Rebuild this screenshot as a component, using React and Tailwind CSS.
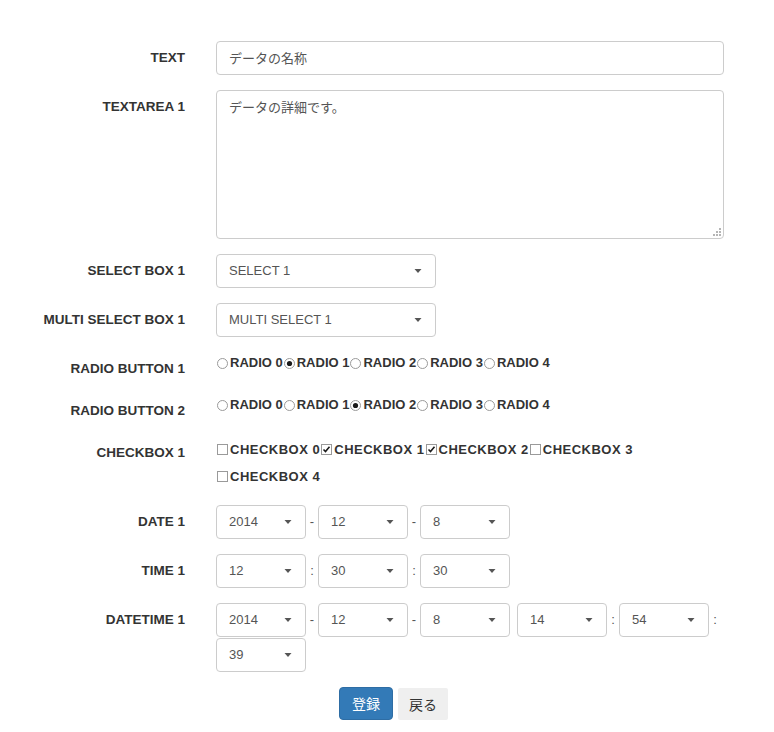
import React from 'react';

const Label = ({ children }) => (
  <div className="w-[185px] shrink-0 text-right pt-[7px] text-[13.5px] leading-[20px] font-bold text-[#333]">
    {children}
  </div>
);

const Caret = () => (
  <svg width="8" height="4" viewBox="0 0 8 4" className="shrink-0">
    <path d="M0.5 0 L7.5 0 L4 4 Z" fill="#555" />
  </svg>
);

const SelectBox = ({ value, width = 'w-[90px]' }) => (
  <div className={`${width} h-[34px] shrink-0 flex items-center justify-between pl-[12px] pr-[13px] border border-[#ccc] rounded-[4px] bg-white text-[13px] text-[#555]`}>
    <span>{value}</span>
    <Caret />
  </div>
);

const Sep = ({ ch }) => (
  <div className="w-[12px] h-[34px] shrink-0 flex items-center justify-center text-[13px] text-[#555]">{ch}</div>
);

const Radio = ({ checked }) => (
  <svg width="13" height="13" viewBox="0 0 13 13" className="shrink-0 mr-[1px]">
    <circle cx="6.5" cy="6.5" r="5" fill="white" stroke="#9a9a9a" strokeWidth="1" />
    {checked && <circle cx="6.5" cy="6.5" r="2.6" fill="#1a1a1a" />}
  </svg>
);

const Check = ({ checked }) => (
  <svg width="13" height="13" viewBox="0 0 13 13" className="shrink-0 mr-[1px]">
    <rect x="1.5" y="1.5" width="10" height="10" fill="white" stroke="#9a9a9a" strokeWidth="1" />
    {checked && <path d="M3.5 6.5 L5.5 8.5 L9.5 3.8" fill="none" stroke="#1a1a1a" strokeWidth="1.6" />}
  </svg>
);

const RadioGroup = ({ selected }) => (
  <div className="flex flex-wrap leading-[22px] text-[13px] font-bold text-[#333]">
    {[0, 1, 2, 3, 4].map(i => (
      <span key={i} className="inline-flex items-center">
        <Radio checked={i === selected} />
        RADIO {i}
      </span>
    ))}
  </div>
);

const App = () => {
  const checked = [false, true, true, false, false];

  return (
    <div className="w-[774px] min-h-[732px] bg-white pt-[41px] font-['Liberation_Sans','Noto_Sans_CJK_JP',Arial,sans-serif]">
      <div className="flex mb-[15px]">
        <Label>TEXT</Label>
        <div className="ml-[31px] w-[508px]">
          <div className="h-[34px] flex items-center px-[12px] border border-[#ccc] rounded-[4px] text-[13px] text-[#555] font-['Noto_Sans_CJK_JP',sans-serif]">
            データの名称
          </div>
        </div>
      </div>

      <div className="flex mb-[15px]">
        <Label>TEXTAREA 1</Label>
        <div className="ml-[31px] w-[508px]">
          <div className="relative h-[149px] px-[12px] py-[6px] border border-[#ccc] rounded-[4px] text-[13px] leading-[20px] text-[#555] font-['Noto_Sans_CJK_JP',sans-serif]">
            データの詳細です。
            <svg width="10" height="10" viewBox="0 0 10 10" className="absolute right-[1px] bottom-[1px]">
              <g fill="#b5b5b5">
                <rect x="7" y="1" width="2" height="2" />
                <rect x="4" y="4" width="2" height="2" />
                <rect x="7" y="4" width="2" height="2" />
                <rect x="1" y="7" width="2" height="2" />
                <rect x="4" y="7" width="2" height="2" />
                <rect x="7" y="7" width="2" height="2" />
              </g>
            </svg>
          </div>
        </div>
      </div>

      <div className="flex mb-[15px]">
        <Label>SELECT BOX 1</Label>
        <div className="ml-[31px] w-[508px]">
          <SelectBox value="SELECT 1" width="w-[220px]" />
        </div>
      </div>

      <div className="flex mb-[15px]">
        <Label>MULTI SELECT BOX 1</Label>
        <div className="ml-[31px] w-[508px]">
          <SelectBox value="MULTI SELECT 1" width="w-[220px]" />
        </div>
      </div>

      <div className="flex mb-[15px]">
        <Label>RADIO BUTTON 1</Label>
        <div className="ml-[31px] w-[508px]">
          <RadioGroup selected={1} />
        </div>
      </div>

      <div className="flex mb-[15px]">
        <Label>RADIO BUTTON 2</Label>
        <div className="ml-[31px] w-[508px]">
          <RadioGroup selected={2} />
        </div>
      </div>

      <div className="flex mb-[15px]">
        <Label>CHECKBOX 1</Label>
        <div className="ml-[31px] w-[508px]">
          <div className="flex flex-wrap leading-[27px] text-[13px] font-bold text-[#333] tracking-[0.5px]">
            {checked.map((c, i) => (
              <span key={i} className="inline-flex items-center">
                <Check checked={c} />
                CHECKBOX {i}
              </span>
            ))}
          </div>
        </div>
      </div>

      <div className="flex mb-[15px]">
        <Label>DATE 1</Label>
        <div className="ml-[31px] w-[508px] flex">
          <SelectBox value="2014" />
          <Sep ch="-" />
          <SelectBox value="12" />
          <Sep ch="-" />
          <SelectBox value="8" />
        </div>
      </div>

      <div className="flex mb-[15px]">
        <Label>TIME 1</Label>
        <div className="ml-[31px] w-[508px] flex">
          <SelectBox value="12" />
          <Sep ch=":" />
          <SelectBox value="30" />
          <Sep ch=":" />
          <SelectBox value="30" />
        </div>
      </div>

      <div className="flex mb-[15px]">
        <Label>DATETIME 1</Label>
        <div className="ml-[31px] w-[508px] flex flex-wrap gap-y-[1px]">
          <SelectBox value="2014" />
          <Sep ch="-" />
          <SelectBox value="12" />
          <Sep ch="-" />
          <SelectBox value="8" />
          <div className="w-[7px] shrink-0" />
          <SelectBox value="14" />
          <Sep ch=":" />
          <SelectBox value="54" />
          <Sep ch=":" />
          <SelectBox value="39" />
        </div>
      </div>

      <div className="flex gap-[5px] pl-[339px] font-['Noto_Sans_CJK_JP',sans-serif] text-[14px]">
        <button className="h-[33px] px-[12px] bg-[#337ab7] border border-[#2e6da4] rounded-[4px] text-white">登録</button>
        <button className="h-[32px] mt-[1px] px-[11px] bg-[#efefef] rounded-[2px] text-[#333]">戻る</button>
      </div>
    </div>
  );
};

export default App;
